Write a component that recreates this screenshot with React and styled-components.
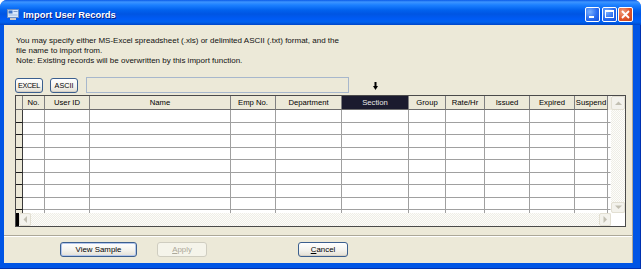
import React from 'react'
import styled, { createGlobalStyle } from 'styled-components'

const GlobalStyle = createGlobalStyle`
  html, body {
    margin: 0;
    padding: 0;
    background: #ffffff;
  }
  body {
    font-family: "Liberation Sans", Arial, sans-serif;
  }
`

const Window = styled.div`
  width: 641px;
  height: 269px;
  display: flex;
  flex-direction: column;
  background: #0055e5;
  border-radius: 7px 7px 0 0;
  overflow: hidden;
`

const TitleBar = styled.div`
  height: 25px;
  flex: none;
  box-sizing: border-box;
  display: flex;
  align-items: center;
  padding: 3px 8px 0 7px;
  background: linear-gradient(
    #0a5ae8 0px,
    #3d95ff 2px,
    #1c80ff 5px,
    #0262ee 10px,
    #0055e3 14px,
    #005bf5 19px,
    #0062ef 22px,
    #0046c8 25px
  );
`

const TitleText = styled.span`
  margin-left: 4px;
  color: #ffffff;
  font-weight: bold;
  font-size: 9.4px;
  text-shadow: 1px 1px 0 #0a1e80;
  flex: 1;
`

const CtrlButton = styled.div`
  width: 15px;
  height: 15px;
  box-sizing: border-box;
  margin-left: 1.5px;
  border: 1px solid #ffffff;
  border-radius: 2px;
  display: grid;
  place-items: center;
  background: ${p =>
    p.$close
      ? 'radial-gradient(circle at 30% 30%, #f0a080, #e0552b 55%, #c0401c)'
      : 'radial-gradient(circle at 30% 30%, #7ab0ff, #2a6cf0 55%, #1550d8)'};
`

const Frame = styled.div`
  flex: 1;
  display: flex;
  padding: 0 8px 6px 4px;
  box-shadow: inset -1px 0 0 #0032b0, inset 0 -1px 0 #0032b0;
`

const Body = styled.div`
  flex: 1;
  display: flex;
  flex-direction: column;
  background: #ece9d8;
  border-right: 1px solid #aca899;
  padding-top: 11px;
`

const Intro = styled.div`
  padding-left: 12px;
  font-size: 8px;
  line-height: 10px;
  color: #111111;
`

const Toolbar = styled.div`
  display: flex;
  align-items: center;
  margin-top: 11px;
  padding-left: 11px;
  height: 16px;
`

const PushButton = styled.button`
  width: ${p => p.$w}px;
  height: ${p => p.$h || 15}px;
  margin-left: ${p => p.$ml || 0}px;
  padding: 0;
  box-sizing: border-box;
  font-family: "Liberation Sans", Arial, sans-serif;
  font-size: ${p => p.$fs || 7.9}px;
  letter-spacing: ${p => p.$ls || 0}px;
  color: #000000;
  border: 1px solid #3b5f8e;
  border-radius: 3px;
  background: linear-gradient(#ffffff, #f4f3ee 55%, #e3e0d5);
  box-shadow: ${p => (p.$focus ? 'inset 0 0 0 1px #b3c6ec' : 'inset 0 -1px 0 #d6d0c5')};

  &:disabled {
    color: #aca899;
    border-color: #cfcdc0;
    background: #f5f4ea;
    box-shadow: none;
  }

  u {
    text-decoration: underline;
  }
`

const FileField = styled.input`
  width: 263px;
  height: 16px;
  margin-left: 8px;
  box-sizing: border-box;
  padding: 0;
  border: 1px solid #a7b7cc;
  background: #ece9d8;
`

const SortArrow = styled.svg`
  margin-left: 24px;
  align-self: flex-end;
  margin-bottom: 3px;
`

const GridBox = styled.div`
  width: 611px;
  height: 132px;
  margin: 2px 0 0 11px;
  box-sizing: border-box;
  border: 1px solid #4a4a4a;
  display: flex;
  flex-direction: column;
  background: #ffffff;
`

const GridTop = styled.div`
  height: 117px;
  display: flex;
`

const Table = styled.div`
  flex: 1;
  overflow: hidden;
  display: grid;
  grid-template-columns: 7px 22px 45px 141px 45px 66px 67px 37px 39px 45px 45px 33px 3px;
  grid-auto-rows: min-content;
`

const HeadCell = styled.div`
  height: 14px;
  box-sizing: border-box;
  border-right: 1px solid #808080;
  border-bottom: 1px solid #6d6d6d;
  background: ${p => (p.$active ? '#1b1b2e' : '#ece9d8')};
  color: ${p => (p.$active ? '#e8e8e8' : '#000000')};
  font-size: 7.7px;
  line-height: 13px;
  text-align: center;
  white-space: nowrap;
  overflow: hidden;
`

const RowHead = styled.div`
  height: ${p => p.$h}px;
  box-sizing: border-box;
  background: #ece9d8;
  border-right: 1px solid #3a3a3a;
  border-bottom: 1px solid #1a1a1a;
`

const Cell = styled.div`
  height: ${p => p.$h}px;
  box-sizing: border-box;
  background: #ffffff;
  border-right: 1px solid ${p => (p.$filler ? 'transparent' : '#a0a0a0')};
  border-bottom: 1px solid #a0a0a0;
`

const FillerHead = styled.div`
  height: 14px;
  background: #f1efe6;
`

const track = `
  background-color: #fbfbf8;
  background-image: repeating-conic-gradient(#efeee6 0 25%, #fdfdfb 0 50%);
  background-size: 2px 2px;
`

const VScroll = styled.div`
  width: 14px;
  display: flex;
  flex-direction: column;
  ${track}
`

const ScrollTrack = styled.div`
  flex: 1;
`

const ScrollBtn = styled.div`
  width: ${p => p.$w || 14}px;
  height: ${p => p.$h || 13}px;
  box-sizing: border-box;
  flex: none;
  border: 1px solid #e2dfd2;
  border-radius: 2px;
  background: #f3f2ec;
  display: grid;
  place-items: center;
`

const GridBottom = styled.div`
  height: 13px;
  display: flex;
`

const CornerBlock = styled.div`
  width: 3px;
  background: #000000;
`

const HScroll = styled.div`
  flex: 1;
  display: flex;
  ${track}
`

const Corner = styled.div`
  width: 14px;
  background: #ffffff;
`

const Separator = styled.div`
  margin-top: 8px;
  height: 0;
  border-top: 1px solid #aca899;
  border-bottom: 1px solid #ffffff;
`

const Footer = styled.div`
  display: flex;
  margin-top: 5px;
  padding-left: 56px;
`

const columns = [
  'No.',
  'User ID',
  'Name',
  'Emp No.',
  'Department',
  'Section',
  'Group',
  'Rate/Hr',
  'Issued',
  'Expired',
  'Suspend',
]

const rowHeights = [13, 12, 13, 12, 13, 12, 13, 12, 13, 12]

const Tri = ({ dir }) => {
  const pts = {
    up: '0,4 3.5,0.5 7,4',
    down: '0,0.5 3.5,4 7,0.5',
    left: '4,0 0.5,3.5 4,7',
    right: '0.5,0 4,3.5 0.5,7',
  }[dir]
  const vertical = dir === 'up' || dir === 'down'
  return (
    <svg width={vertical ? 7 : 5} height={vertical ? 5 : 7}>
      <polygon points={pts} fill="#c2bfb2" />
    </svg>
  )
}

const AppIcon = () => (
  <svg width="12" height="11" viewBox="0 0 12 11">
    <rect x="0.5" y="0.5" width="11" height="8" fill="#d8e8fb" stroke="#6b8fc4" />
    <rect x="1.5" y="1.5" width="4" height="3" fill="#3a73c9" />
    <rect x="6.5" y="2" width="4" height="1" fill="#7f9fcf" />
    <rect x="1.5" y="5.5" width="9" height="1" fill="#9fb9de" />
    <rect x="3" y="9" width="6" height="2" fill="#c9c9c9" />
  </svg>
)

const App = () => (
  <React.Fragment>
    <GlobalStyle />
    <Window>
      <TitleBar>
        <AppIcon />
        <TitleText>Import User Records</TitleText>
        <CtrlButton>
          <svg width="11" height="11">
            <rect x="2" y="7" width="5" height="2" fill="#fff" />
          </svg>
        </CtrlButton>
        <CtrlButton>
          <svg width="11" height="11">
            <rect x="1.5" y="1.5" width="8" height="7" fill="none" stroke="#fff" />
            <rect x="1" y="1" width="9" height="2" fill="#fff" />
          </svg>
        </CtrlButton>
        <CtrlButton $close>
          <svg width="11" height="11">
            <path d="M2 2 L9 9 M9 2 L2 9" stroke="#fff" strokeWidth="1.8" />
          </svg>
        </CtrlButton>
      </TitleBar>
      <Frame>
        <Body>
          <Intro>
            You may specify either MS-Excel spreadsheet (.xls) or delimited ASCII (.txt) format, and the
            <br />
            file name to import from.
            <br />
            Note: Existing records will be overwritten by this import function.
          </Intro>
          <Toolbar>
            <PushButton $w={28} $h={15} $fs={7.2} $ls={-0.3}>EXCEL</PushButton>
            <PushButton $w={28} $h={15} $fs={7.2} $ml={7}>ASCII</PushButton>
            <FileField disabled />
            <SortArrow width="5" height="8" viewBox="0 0 5 8">
              <rect x="1.5" y="0" width="2" height="5" fill="#000" />
              <polygon points="0,4 5,4 2.5,8" fill="#000" />
            </SortArrow>
          </Toolbar>
          <GridBox>
            <GridTop>
              <Table>
                <HeadCell />
                {columns.map(c => (
                  <HeadCell key={c} $active={c === 'Section'}>
                    {c}
                  </HeadCell>
                ))}
                <FillerHead />
                {rowHeights.map((h, r) => (
                  <React.Fragment key={r}>
                    <RowHead $h={h} />
                    {columns.map(c => (
                      <Cell key={c} $h={h} />
                    ))}
                    <Cell $h={h} $filler />
                  </React.Fragment>
                ))}
              </Table>
              <VScroll>
                <ScrollBtn $h={14}>
                  <Tri dir="up" />
                </ScrollBtn>
                <ScrollTrack />
                <ScrollBtn $h={11}>
                  <Tri dir="down" />
                </ScrollBtn>
              </VScroll>
            </GridTop>
            <GridBottom>
              <CornerBlock />
              <HScroll>
                <ScrollBtn $w={12}>
                  <Tri dir="left" />
                </ScrollBtn>
                <ScrollTrack />
                <ScrollBtn $w={12}>
                  <Tri dir="right" />
                </ScrollBtn>
              </HScroll>
              <Corner />
            </GridBottom>
          </GridBox>
          <Separator />
          <Footer>
            <PushButton $w={77} $focus>View Sample</PushButton>
            <PushButton $w={50} $ml={20} disabled>
              <u>A</u>pply
            </PushButton>
            <PushButton $w={50} $ml={91}>
              <u>C</u>ancel
            </PushButton>
          </Footer>
        </Body>
      </Frame>
    </Window>
  </React.Fragment>
)

export default App
